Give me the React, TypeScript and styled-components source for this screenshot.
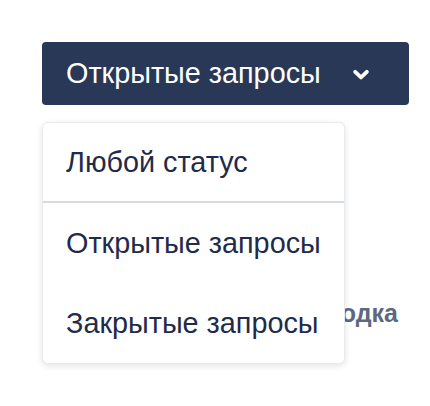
import React from "react";
import styled, { createGlobalStyle } from "styled-components";

const Global = createGlobalStyle`
  html, body { margin: 0; padding: 0; background: #ffffff; }
  body { font-family: "Liberation Sans", Arial, Helvetica, sans-serif; }
`;

const Page = styled.div`
  padding: 42px 0 0 42px;
  width: 430px;
  height: 406px;
  box-sizing: border-box;
`;

const Wrapper = styled.div`
  position: relative;
  width: 367px;
`;

const Toggle = styled.button`
  display: flex;
  align-items: center;
  justify-content: space-between;
  width: 367px;
  height: 63px;
  padding: 0 40px 0 24px;
  box-sizing: border-box;
  border: none;
  border-radius: 4px;
  background: #2a3857;
  color: #ffffff;
  font-family: inherit;
  font-size: 28.8px;
  white-space: nowrap;
  cursor: pointer;
`;

const Content = styled.div`
  padding-top: 193px;
  display: flex;
  justify-content: flex-end;
  padding-right: 11px;
`;

const Heading = styled.div`
  font-size: 25px;
  line-height: 30px;
  font-weight: 700;
  color: #5d6880;
`;

const Menu = styled.ul`
  position: absolute;
  top: 80px;
  left: 0;
  width: 303px;
  margin: 0;
  padding: 0;
  list-style: none;
  background: #ffffff;
  border: 1px solid #e8eaee;
  border-radius: 6px;
  box-shadow: 0 2px 6px rgba(20, 30, 50, 0.12);
  box-sizing: border-box;
  overflow: hidden;
`;

const Item = styled.li<{ $divider?: boolean }>`
  height: 80px;
  display: flex;
  align-items: center;
  padding: 0 0 0 23px;
  font-size: 28.8px;
  white-space: nowrap;
  color: #1f2b4a;
  border-bottom: ${(p) => (p.$divider ? "2px solid #d7dbe1" : "none")};
  box-sizing: border-box;
`;

const ChevronIcon = styled.svg`
  flex: 0 0 auto;
  display: block;
  margin-top: 2px;
`;

const Chevron = () => (
  <ChevronIcon width="16" height="12" viewBox="0 0 16 12" fill="none">
    <path d="M2.2 2.8l5.8 5.6 5.8-5.6" stroke="#ffffff" strokeWidth="3.8" strokeLinecap="round" strokeLinejoin="round" />
  </ChevronIcon>
);

export default function App() {
  return (
    <Page>
      <Global />
      <Wrapper>
        <Toggle>
          <span>Открытые запросы</span>
          <Chevron />
        </Toggle>
        <Content>
          <Heading>Сводка</Heading>
        </Content>
        <Menu>
          <Item $divider>Любой статус</Item>
          <Item>Открытые запросы</Item>
          <Item>Закрытые запросы</Item>
        </Menu>
      </Wrapper>
    </Page>
  );
}
